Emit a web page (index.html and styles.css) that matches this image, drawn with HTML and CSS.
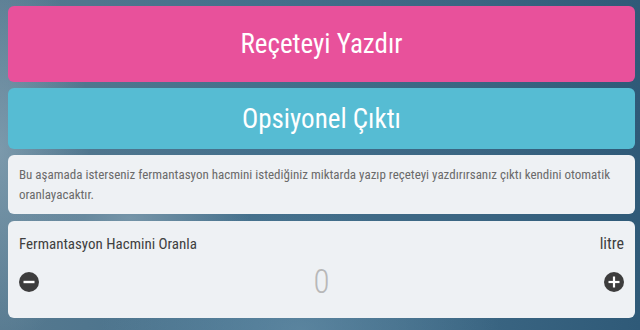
FILE: index.html
```html
<!DOCTYPE html>
<html lang="tr">
<head>
<meta charset="utf-8">
<title>Reçete</title>
<link rel="stylesheet" href="styles.css">
</head>
<body>
<main class="stack">
  <button class="btn btn-pink">Reçeteyi Yazdır</button>
  <button class="btn btn-cyan">Opsiyonel Çıktı</button>
  <section class="card info">
    <p>Bu aşamada isterseniz fermantasyon hacmini istediğiniz miktarda yazıp reçeteyi yazdırırsanız çıktı kendini otomatik oranlayacaktır.</p>
  </section>
  <section class="card volume">
    <div class="volume-head">
      <span class="label">Fermantasyon Hacmini Oranla</span>
      <span class="unit">litre</span>
    </div>
    <div class="volume-row">
      <span class="round-icon" aria-label="azalt">
        <svg viewBox="0 0 20 20" width="20" height="20"><circle cx="10" cy="10" r="10" fill="#3d3d3d"/><rect x="4.5" y="8.8" width="11" height="2.4" fill="#fff"/></svg>
      </span>
      <span class="value">0</span>
      <span class="round-icon" aria-label="artır">
        <svg viewBox="0 0 20 20" width="20" height="20"><circle cx="10" cy="10" r="10" fill="#3d3d3d"/><rect x="4.5" y="8.9" width="11" height="2.2" fill="#fff"/><rect x="8.9" y="4.5" width="2.2" height="11" fill="#fff"/></svg>
      </span>
    </div>
  </section>
</main>
</body>
</html>
```

FILE: styles.css
```css
html, body {
  margin: 0;
  height: 100%;
}
body {
  font-family: "Roboto Condensed", Roboto, sans-serif;
  font-stretch: condensed;
  background:
    radial-gradient(ellipse 120px 40px at 130px 218px, rgba(150,175,190,0.55), transparent),
    radial-gradient(ellipse 90px 200px at 0px 150px, rgba(160,185,200,0.5), transparent),
    radial-gradient(ellipse 200px 120px at 300px 330px, rgba(110,150,175,0.55), transparent),
    linear-gradient(90deg, #56798f 0%, #44708c 40%, #3a6582 75%, #2f5a78 100%);
  padding: 6px 5px 0 8px;
  box-sizing: border-box;
}
.stack {
  display: flex;
  flex-direction: column;
  gap: 6px;
}
.btn {
  font-family: inherit;
  font-stretch: inherit;
  border: 0;
  border-radius: 6px;
  color: #fff;
  font-size: 27px;
  width: 100%;
  padding: 0;
  cursor: pointer;
}
.btn-pink {
  background: #e8519b;
  height: 76px;
}
.btn-cyan {
  background: #56bcd3;
  height: 61px;
}
.card {
  background: #eef1f4;
  border-radius: 6px;
  box-sizing: border-box;
}
.info {
  height: 59px;
  padding: 10px 11px;
}
.info p {
  margin: 0;
  font-size: 13px;
  line-height: 20px;
  color: #6a6a6a;
}
.volume {
  height: 97px;
  margin-top: 1px;
  padding: 13px 11px 0 11px;
}
.volume-head {
  display: flex;
  justify-content: space-between;
  align-items: baseline;
  font-size: 15px;
  color: #3f3f3f;
}
.unit {
  font-size: 16px;
}
.volume-row {
  display: flex;
  justify-content: space-between;
  align-items: center;
  margin-top: 9px;
}
.round-icon {
  display: flex;
  width: 20px;
  height: 20px;
}
.value {
  font-size: 33px;
  font-weight: 300;
  color: #b8b8b8;
  line-height: 40px;
}
```
